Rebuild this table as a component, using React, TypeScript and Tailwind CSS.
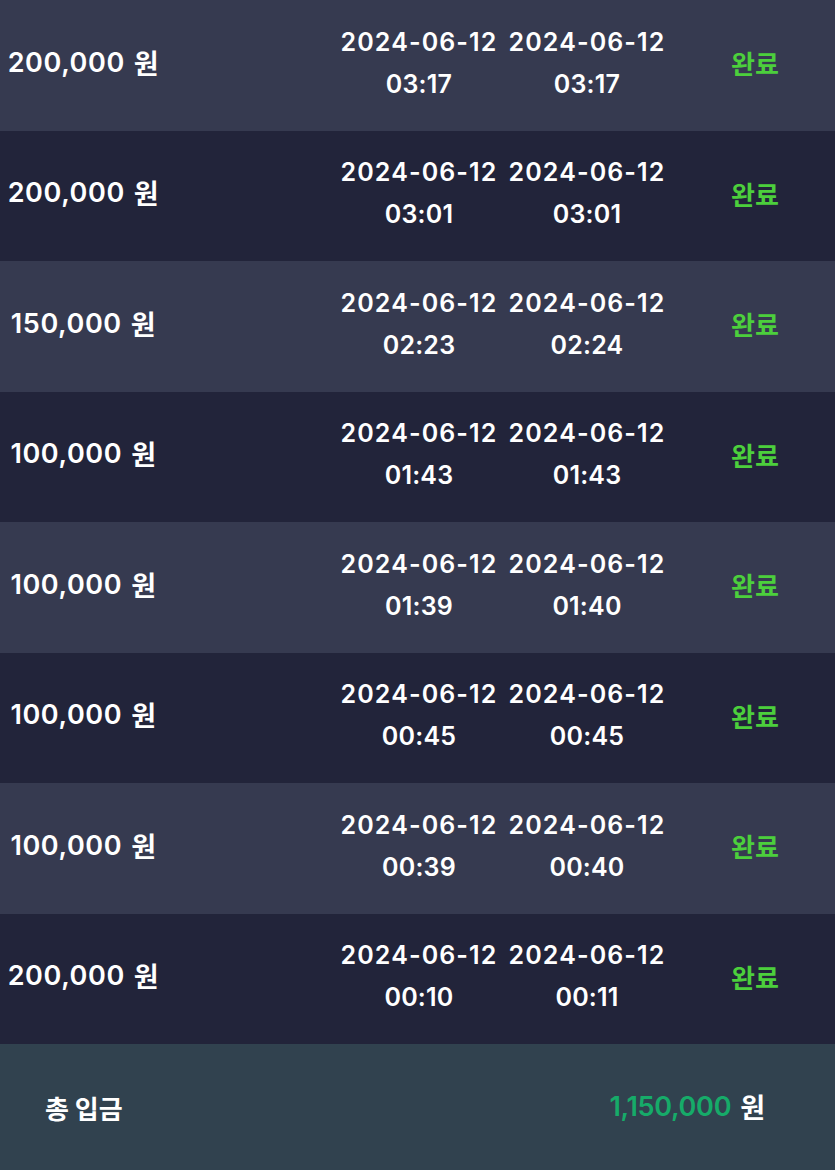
import React from "react";

type Row = {
  amount: string;
  reqDate: string;
  reqTime: string;
  doneDate: string;
  doneTime: string;
};

const rows: Row[] = [
  { amount: "200,000", reqDate: "2024-06-12", reqTime: "03:17", doneDate: "2024-06-12", doneTime: "03:17" },
  { amount: "200,000", reqDate: "2024-06-12", reqTime: "03:01", doneDate: "2024-06-12", doneTime: "03:01" },
  { amount: "150,000", reqDate: "2024-06-12", reqTime: "02:23", doneDate: "2024-06-12", doneTime: "02:24" },
  { amount: "100,000", reqDate: "2024-06-12", reqTime: "01:43", doneDate: "2024-06-12", doneTime: "01:43" },
  { amount: "100,000", reqDate: "2024-06-12", reqTime: "01:39", doneDate: "2024-06-12", doneTime: "01:40" },
  { amount: "100,000", reqDate: "2024-06-12", reqTime: "00:45", doneDate: "2024-06-12", doneTime: "00:45" },
  { amount: "100,000", reqDate: "2024-06-12", reqTime: "00:39", doneDate: "2024-06-12", doneTime: "00:40" },
  { amount: "200,000", reqDate: "2024-06-12", reqTime: "00:10", doneDate: "2024-06-12", doneTime: "00:11" },
];

const font = "font-['Inter','Noto_Sans_CJK_KR',sans-serif]";

function DateCell({ date, time }: { date: string; time: string }) {
  return (
    <div className="flex flex-col items-center gap-[10px] -mt-[5px] text-white text-[25px] font-semibold leading-[32px]">
      <span className="tracking-[1.1px]">{date}</span>
      <span className="tracking-[0.2px]">{time}</span>
    </div>
  );
}

export default function App() {
  return (
    <div className={`w-[835px] h-[1170px] overflow-hidden bg-[#22243a] ${font}`}>
      {rows.map((r, i) => (
        <div
          key={i}
          className={`grid grid-cols-[167px_167px_170px_166px_1fr] items-center h-[130.5px] ${
            i % 2 === 0 ? "bg-[#363a50]" : "bg-[#22243a]"
          }`}
        >
          <div className="flex justify-center items-center -mt-[5px] text-white text-[27px] font-semibold tracking-[0.6px]">
            <span>{r.amount}</span>
            <span className="ml-[9px] font-['Noto_Sans_CJK_KR',sans-serif] font-bold text-[27px]">원</span>
          </div>
          <div />
          <DateCell date={r.reqDate} time={r.reqTime} />
          <DateCell date={r.doneDate} time={r.doneTime} />
          <div className="flex justify-center pl-[5px] -mt-[5px] text-[#4ccf3c] text-[26px] font-bold font-['Noto_Sans_CJK_KR',sans-serif]">
            완료
          </div>
        </div>
      ))}
      <div className="flex items-center justify-between h-[126px] bg-[#31424f] pl-[45px] pr-[70px]">
        <span className="text-white text-[26px] font-bold font-['Noto_Sans_CJK_KR',sans-serif]">총 입금</span>
        <span className="flex items-center text-[27px] font-semibold">
          <span className="text-[#16ab69] tracking-[-0.3px]">1,150,000</span>
          <span className="ml-[9px] text-white font-bold text-[27px] font-['Noto_Sans_CJK_KR',sans-serif]">원</span>
        </span>
      </div>
    </div>
  );
}
